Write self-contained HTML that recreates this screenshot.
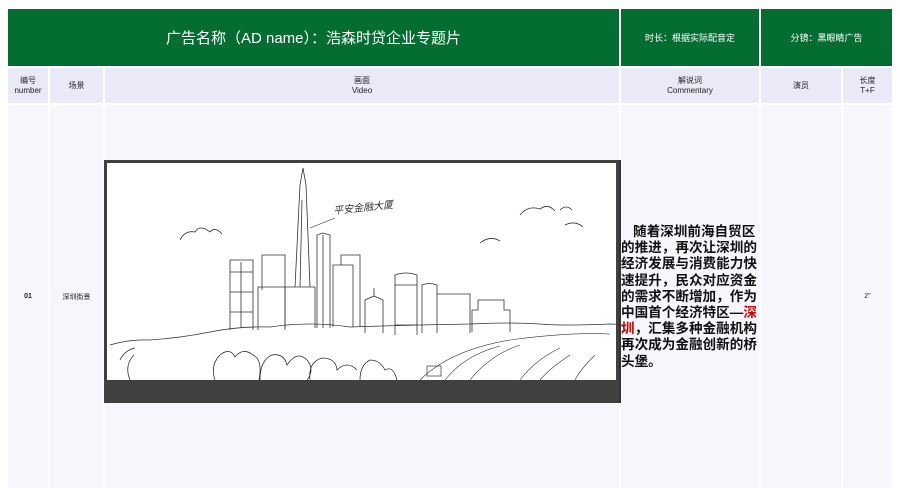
<!DOCTYPE html>
<html><head><meta charset="utf-8"><style>
*{margin:0;padding:0;box-sizing:border-box}
body{width:900px;height:496px;background:#fff;font-family:"Liberation Sans","Noto Sans CJK SC",sans-serif;position:relative;overflow:hidden}
.a{position:absolute;display:flex;align-items:center;justify-content:center;text-align:center}
.g{background:#046d32;color:#fff}
.h{background:#e9e9f8;color:#222;font-size:8px;line-height:10px}
.b{background:#f6f6fc;color:#222;font-size:7px}
</style></head><body>
<div class="a g" style="left:8px;top:9px;width:611px;height:57px;font-size:15px">广告名称（AD name）：浩森时贷企业专题片</div>
<div class="a g" style="left:621px;top:9px;width:138px;height:57px;font-size:9px">时长：根据实际配音定</div>
<div class="a g" style="left:761px;top:9px;width:131px;height:57px;font-size:9px">分镜：黑眼睛广告</div>

<div class="a h" style="left:8px;top:68px;width:40px;height:35px">编号<br>number</div>
<div class="a h" style="left:50px;top:68px;width:53px;height:35px">场景</div>
<div class="a h" style="left:105px;top:68px;width:514px;height:35px">画面<br>Video</div>
<div class="a h" style="left:621px;top:68px;width:138px;height:35px">解说词<br>Commentary</div>
<div class="a h" style="left:761px;top:68px;width:80px;height:35px">演员</div>
<div class="a h" style="left:843px;top:68px;width:49px;height:35px">长度<br>T+F</div>

<div class="a b" style="left:8px;top:105px;width:40px;height:383px;font-weight:bold">01</div>
<div class="a b" style="left:50px;top:105px;width:53px;height:383px">深圳街景</div>
<div class="a b" style="left:105px;top:105px;width:514px;height:383px"></div>
<div class="a b" style="left:621px;top:105px;width:138px;height:383px"></div>
<div class="a b" style="left:761px;top:105px;width:80px;height:383px"></div>
<div class="a b" style="left:843px;top:105px;width:49px;height:383px">2"</div>

<div style="position:absolute;left:619px;top:160px;width:2px;height:243px;background:#333"></div>
<div style="position:absolute;left:621px;top:224px;width:139px;font-size:13.6px;font-weight:bold;line-height:16.2px;color:#111;text-align:left;text-indent:12px">随着深圳前海自贸区的推进，再次让深圳的经济发展与消费能力快速提升，民众对应资金的需求不断增加，作为中国首个经济特区—<span style="color:#d00">深圳</span>，汇集多种金融机构再次成为金融创新的桥头堡。</div>

<div style="position:absolute;left:104px;top:160px;width:515px;height:243px;background:#404040"></div>
<div style="position:absolute;left:107px;top:163px;width:509px;height:217px;background:#fff"></div>
<svg style="position:absolute;left:0;top:0" width="900" height="496" viewBox="0 0 900 496" fill="none" stroke="#333" stroke-width="0.8">
<path d="M230 330V260h23v70M230 272h23M230 292h23M230 312h23M241 262v66"/>
<path d="M262 290V255h23v35M258 330V287h27v43"/>
<path d="M285 328V287h30v41"/>
<path d="M295 287L300 185L303 168L306 185L310 287M300 287L302 200"/>
<path d="M317 328V235l6-2 7 2v93M323 235v93"/>
<path d="M333 327V265h8v-10h19v72M341 265h12v62"/>
<path d="M365 333V300l9-4 9 4v33M374 296v-8"/>
<path d="M395 335V275q11-4 22 0v60M395 285h22M395 325h22"/>
<path d="M422 333V285q7-3 15 0v48M437 333V294h33v39"/>
<path d="M472 332V310h6v-10h26v10h6v22"/>
<path d="M310 228L325 222L335 218" stroke-width="0.6"/>
<path d="M110 345q20-6 40 -5q30-2 60-8q30-6 60-5q40-6 80 0q60-2 120 -3q40-2 70 0q20 2 70 0q20 0 12 10"/>
<path d="M215 380q-5-15 5-25q10-8 15 2q8-10 18-2q10 5 6 25M260 380q0-20 12-25q12-2 15 10q10-15 20-5q8 10 0 20M310 380q-2-18 12-22q14 0 15 12q10-10 20 0M120 360q5-10 15-12M130 380q-6-15 4-25M360 380q0-15 10-20q10 0 15 10q8-5 12 10"/>
<path d="M420 380q30-30 90-40q60-8 100-6M445 380q20-25 55-34M470 380q20-25 50-35M520 380q15-20 40-32M540 380q10-12 30-25M575 380q5-10 20-25" stroke-width="0.6"/>
<rect x="427" y="366" width="14" height="10" stroke-width="0.7"/>
<path d="M180 240q5-10 15-8q5-8 15 0q5-6 12 2M520 215q8-10 20-6q8-6 15 2M480 243q10-8 20 -2M560 210q6-6 12 0M565 225q10-5 18 2"/>
</svg>
<div style="position:absolute;left:333px;top:199px;font-size:10px;color:#333;font-style:italic;transform:rotate(-6deg);font-family:'Noto Sans CJK SC',sans-serif">平安金融大厦</div>
</body></html>
